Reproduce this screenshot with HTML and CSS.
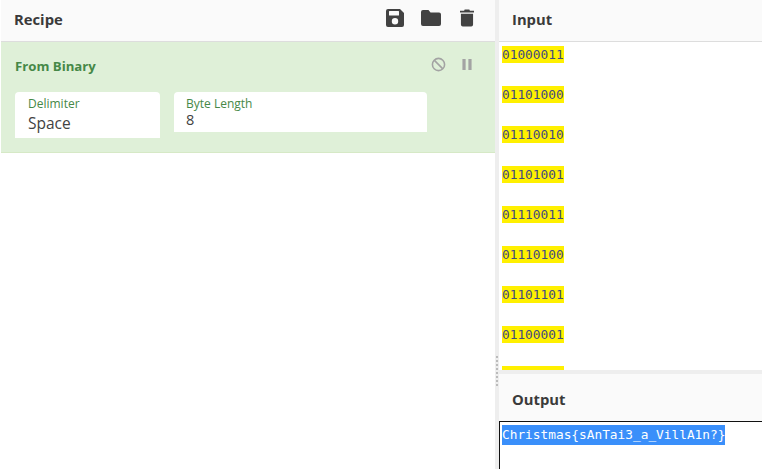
FILE: index.html
```html
<!DOCTYPE html>
<html lang="en">
<head>
<meta charset="utf-8">
<title>Recipe</title>
<link rel="stylesheet" href="styles.css">
</head>
<body>
<div class="app">
  <section class="recipe">
    <header class="head">
      <h2 class="title">Recipe</h2>
      <div class="tools">
        <svg class="tool save" viewBox="0 0 18 18"><path fill-rule="evenodd" d="M2 0h12l4 4v12a2 2 0 0 1-2 2H2a2 2 0 0 1-2-2V2a2 2 0 0 1 2-2zm1 2.500v3.500a.500.500 0 0 0 .500.500h9a.500.500 0 0 0 .500-.500V2.500a.500.500 0 0 0-.500-.500h-9a.500.500 0 0 0-.500.500zM9 9a3.200 3.200 0 1 0 0 6.400A3.200 3.200 0 0 0 9 9z"/></svg>
        <svg class="tool folder" viewBox="0 0 20 16"><path d="M2 0h5.500l2 2.500H18a2 2 0 0 1 2 2V14a2 2 0 0 1-2 2H2a2 2 0 0 1-2-2V2a2 2 0 0 1 2-2z"/></svg>
        <svg class="tool trash" viewBox="0 0 15 18"><path d="M5 0h5l.6 1.200H15v2H0v-2h4.400zM1 4.500h13V16a2 2 0 0 1-2 2H3a2 2 0 0 1-2-2z"/></svg>
      </div>
    </header>
    <div class="op">
      <div class="op-head">
        <span class="op-name">From Binary</span>
        <div class="op-tools">
          <svg class="disable" viewBox="0 0 16 16"><circle cx="8" cy="8" r="6.500"/><path d="M3.400 3.400l9.200 9.200"/></svg>
          <svg class="pause" viewBox="0 0 10 12"><path d="M0 0h3.500v12H0zM6.500 0H10v12H6.500z"/></svg>
        </div>
      </div>
      <div class="args">
        <div class="arg arg-delim">
          <span class="arg-label">Delimiter</span>
          <span class="arg-value arg-value-lg">Space</span>
        </div>
        <div class="arg arg-byte">
          <span class="arg-label">Byte Length</span>
          <span class="arg-value">8</span>
        </div>
      </div>
    </div>
  </section>
  <div class="gutter"><span class="grip"></span></div>
  <section class="io">
    <div class="input">
      <header class="head"><h2 class="title title-io">Input</h2></header>
      <div class="lines">
        <div class="line"><mark>01000011</mark></div>
        <div class="line"><mark>01101000</mark></div>
        <div class="line"><mark>01110010</mark></div>
        <div class="line"><mark>01101001</mark></div>
        <div class="line"><mark>01110011</mark></div>
        <div class="line"><mark>01110100</mark></div>
        <div class="line"><mark>01101101</mark></div>
        <div class="line"><mark>01100001</mark></div>
        <div class="line"><mark>01110011</mark></div>
      </div>
    </div>
    <div class="hgutter"></div>
    <div class="output">
      <header class="output-head"><h2 class="title title-io">Output</h2></header>
      <div class="result"><span class="selected">Christmas{sAnTai3_a_VillA1n?}</span></div>
    </div>
  </section>
</div>
</body>
</html>
```
FILE: styles.css
```css
* { box-sizing: border-box; }
html, body { margin: 0; height: 100%; }
body { background: #fff; overflow: hidden; font-family: "Open Sans", "Noto Sans", sans-serif; color: #333; }
.app { display: flex; width: 762px; height: 469px; padding-left: 1px; }
.recipe { width: 494px; flex: none; display: flex; flex-direction: column; }
.head { height: 42px; flex: none; display: flex; align-items: center; justify-content: space-between; background: #fafafa; border-bottom: 1px solid #ddd; }
.title { margin: 0; font-size: 14.800px; font-weight: 700; color: #3a3a3a; padding-left: 13px; line-height: 20px; position: relative; top: -2px; }
.title-io { padding-left: 13px; }
.tools { display: flex; align-items: center; gap: 17px; padding-right: 21px; position: relative; top: -3px; }
.tool { fill: #424242; display: block; }
.save { width: 18px; height: 18px; }
.folder { width: 20px; height: 16px; }
.trash { width: 14px; height: 18px; margin-left: 2px; }
.op { height: 111px; background: #dff0d8; border-bottom: 1px solid #d6e9c6; padding: 14px 14px 0; }
.op-head { display: flex; justify-content: space-between; align-items: flex-start; height: 36px; }
.op-name { font-size: 13.200px; font-weight: 700; color: #468847; line-height: 20px; }
.op-tools { display: flex; align-items: center; gap: 16px; padding: 0 9px 0 0; height: 15px; margin-top: 1px; }
.disable { width: 15px; height: 15px; fill: none; stroke: #a3a3a3; stroke-width: 1.700; }
.pause { width: 10px; height: 11px; fill: #a3a3a3; }
.args { display: flex; align-items: flex-start; gap: 14px; }
.arg { background: #fff; border-radius: 4px 4px 0 0; padding: 3px 13px 0 13px; display: flex; flex-direction: column; }
.arg-delim { width: 145px; height: 46px; }
.arg-byte { width: 253px; height: 40px; padding-left: 12px; }
.arg-label { font-size: 12px; line-height: 17px; color: #468847; }
.arg-value { font-size: 14.500px; line-height: 15px; color: #424242; }
.arg-value-lg { font-size: 15.500px; line-height: 23px; }
.gutter { width: 4px; flex: none; background: #eee; position: relative; }
.grip { position: absolute; left: 1px; top: 356px; width: 2px; height: 32px; background: repeating-linear-gradient(#bbb 0 2px, #eee 2px 4px); }
.io { flex: 1; min-width: 0; display: flex; flex-direction: column; }
.input { height: 370px; flex: none; overflow: hidden; }
.lines { padding-left: 3px; }
.line { height: 40px; padding-top: 4px; font-family: "DejaVu Sans Mono", "Liberation Mono", monospace; font-size: 12.800px; line-height: 17px; color: #3f4a80; }
mark { background: #fff000; color: inherit; display: inline-block; height: 17px; }
.hgutter { height: 4px; flex: none; background: #eee; }
.output { flex: 1; min-height: 0; display: flex; flex-direction: column; }
.output-head { height: 47px; flex: none; display: flex; align-items: center; background: #fafafa; padding-top: 6px; }
.result { flex: 1; border-top: 1px solid #111; border-left: 1px solid #111; padding: 3px 0 0 2px; font-family: "DejaVu Sans Mono", "Liberation Mono", monospace; font-size: 12.800px; line-height: 20px; }
.selected { background: #3a8ffa; color: #fff; display: inline-block; height: 20px; }
```
